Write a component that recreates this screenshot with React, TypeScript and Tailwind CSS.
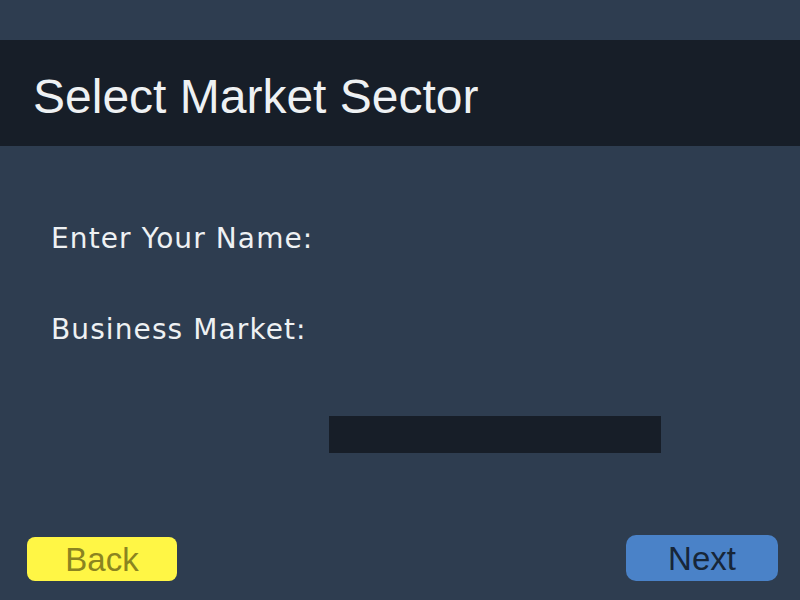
const App = () => {
  return (
    <div className="flex flex-col h-[600px] w-[800px] bg-[#2e3d50] overflow-hidden">
      <div className="mt-10 h-[106px] bg-[#171e28] pl-[33px] pt-[33px]">
        <h1 className="font-['Liberation_Sans',Arial,sans-serif] text-[48px] leading-[48px] text-[#eef1f3]">
          Select Market Sector
        </h1>
      </div>

      <div className="flex flex-col gap-[59px] pl-[51px] pt-[77px] font-['DejaVu_Sans',sans-serif] text-[28px] leading-[32px] tracking-[1.1px] text-[#eef1f3]">
        <p>Enter Your Name:</p>
        <p>Business Market:</p>
      </div>

      <div className="mt-[70px] ml-[329px] w-[332px] h-[37px] bg-[#171e28]" />

      <div className="mt-auto flex justify-between items-end pl-[27px] pr-[22px] pb-[19px] font-['Liberation_Sans',Arial,sans-serif] text-[33px]">
        <button className="w-[150px] h-[44px] leading-[46px] rounded-lg bg-[#fff645] text-[#8b8420]">
          Back
        </button>
        <button className="w-[152px] h-[46px] leading-[48px] rounded-[10px] bg-[#4a82c8] text-[#172638]">
          Next
        </button>
      </div>
    </div>
  );
};

export default App;
